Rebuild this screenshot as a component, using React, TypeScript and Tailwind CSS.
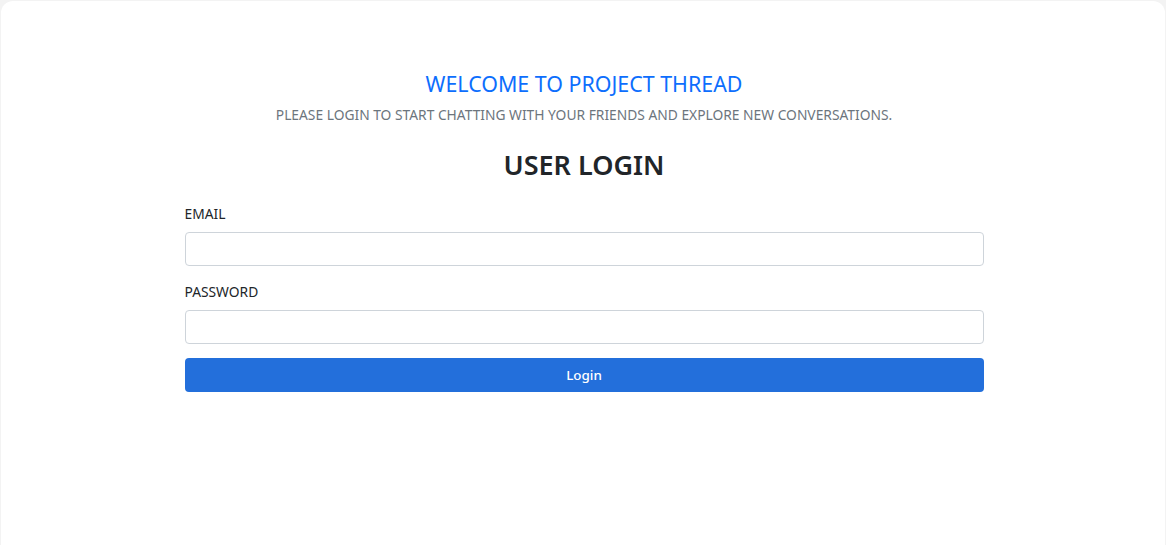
import { useState } from "react";

export default function App() {
  const [email, setEmail] = useState("");
  const [password, setPassword] = useState("");

  return (
    <div className="min-h-screen bg-[#f3f3f3] pt-px px-px" style={{ fontFamily: '"Noto Sans", "Open Sans", sans-serif' }}>
      <div className="min-h-[560px] rounded-t-xl bg-white pt-[71px] pl-[2px]">
        <div className="text-center">
          <h2 className="text-[21.4px] leading-[24px] text-[#0d6efd]">WELCOME TO PROJECT THREAD</h2>
          <p className="mt-[9px] text-[13.8px] leading-[20px] text-[#6c757d]">
            PLEASE LOGIN TO START CHATTING WITH YOUR FRIENDS AND EXPLORE NEW CONVERSATIONS.
          </p>
        </div>

        <div className="mx-auto mt-[23px] w-[799px]">
          <h1 className="text-center text-[27px] leading-[34px] font-semibold text-[#212529]">USER LOGIN</h1>

          <form className="mt-[22px]" onSubmit={(e) => e.preventDefault()}>
            <label className="block">
              <span className="block text-[13.8px] leading-[20px] text-[#212529]">EMAIL</span>
              <input type="email" value={email} onChange={(e) => setEmail(e.target.value)}
                className="mt-[8px] block h-[34px] w-full rounded-[4px] border border-[#ced4da] bg-white px-3 text-sm outline-none" />
            </label>
            <label className="mt-[16px] block">
              <span className="block text-[13.8px] leading-[20px] text-[#212529]">PASSWORD</span>
              <input type="password" value={password} onChange={(e) => setPassword(e.target.value)}
                className="mt-[8px] block h-[34px] w-full rounded-[4px] border border-[#ced4da] bg-white px-3 text-sm outline-none" />
            </label>
            <button type="submit"
              className="mt-[14px] block h-[34px] w-full rounded-[4px] bg-[#236fdb] text-[13.4px] font-medium text-white">
              Login
            </button>
          </form>
        </div>
      </div>
    </div>
  );
}
